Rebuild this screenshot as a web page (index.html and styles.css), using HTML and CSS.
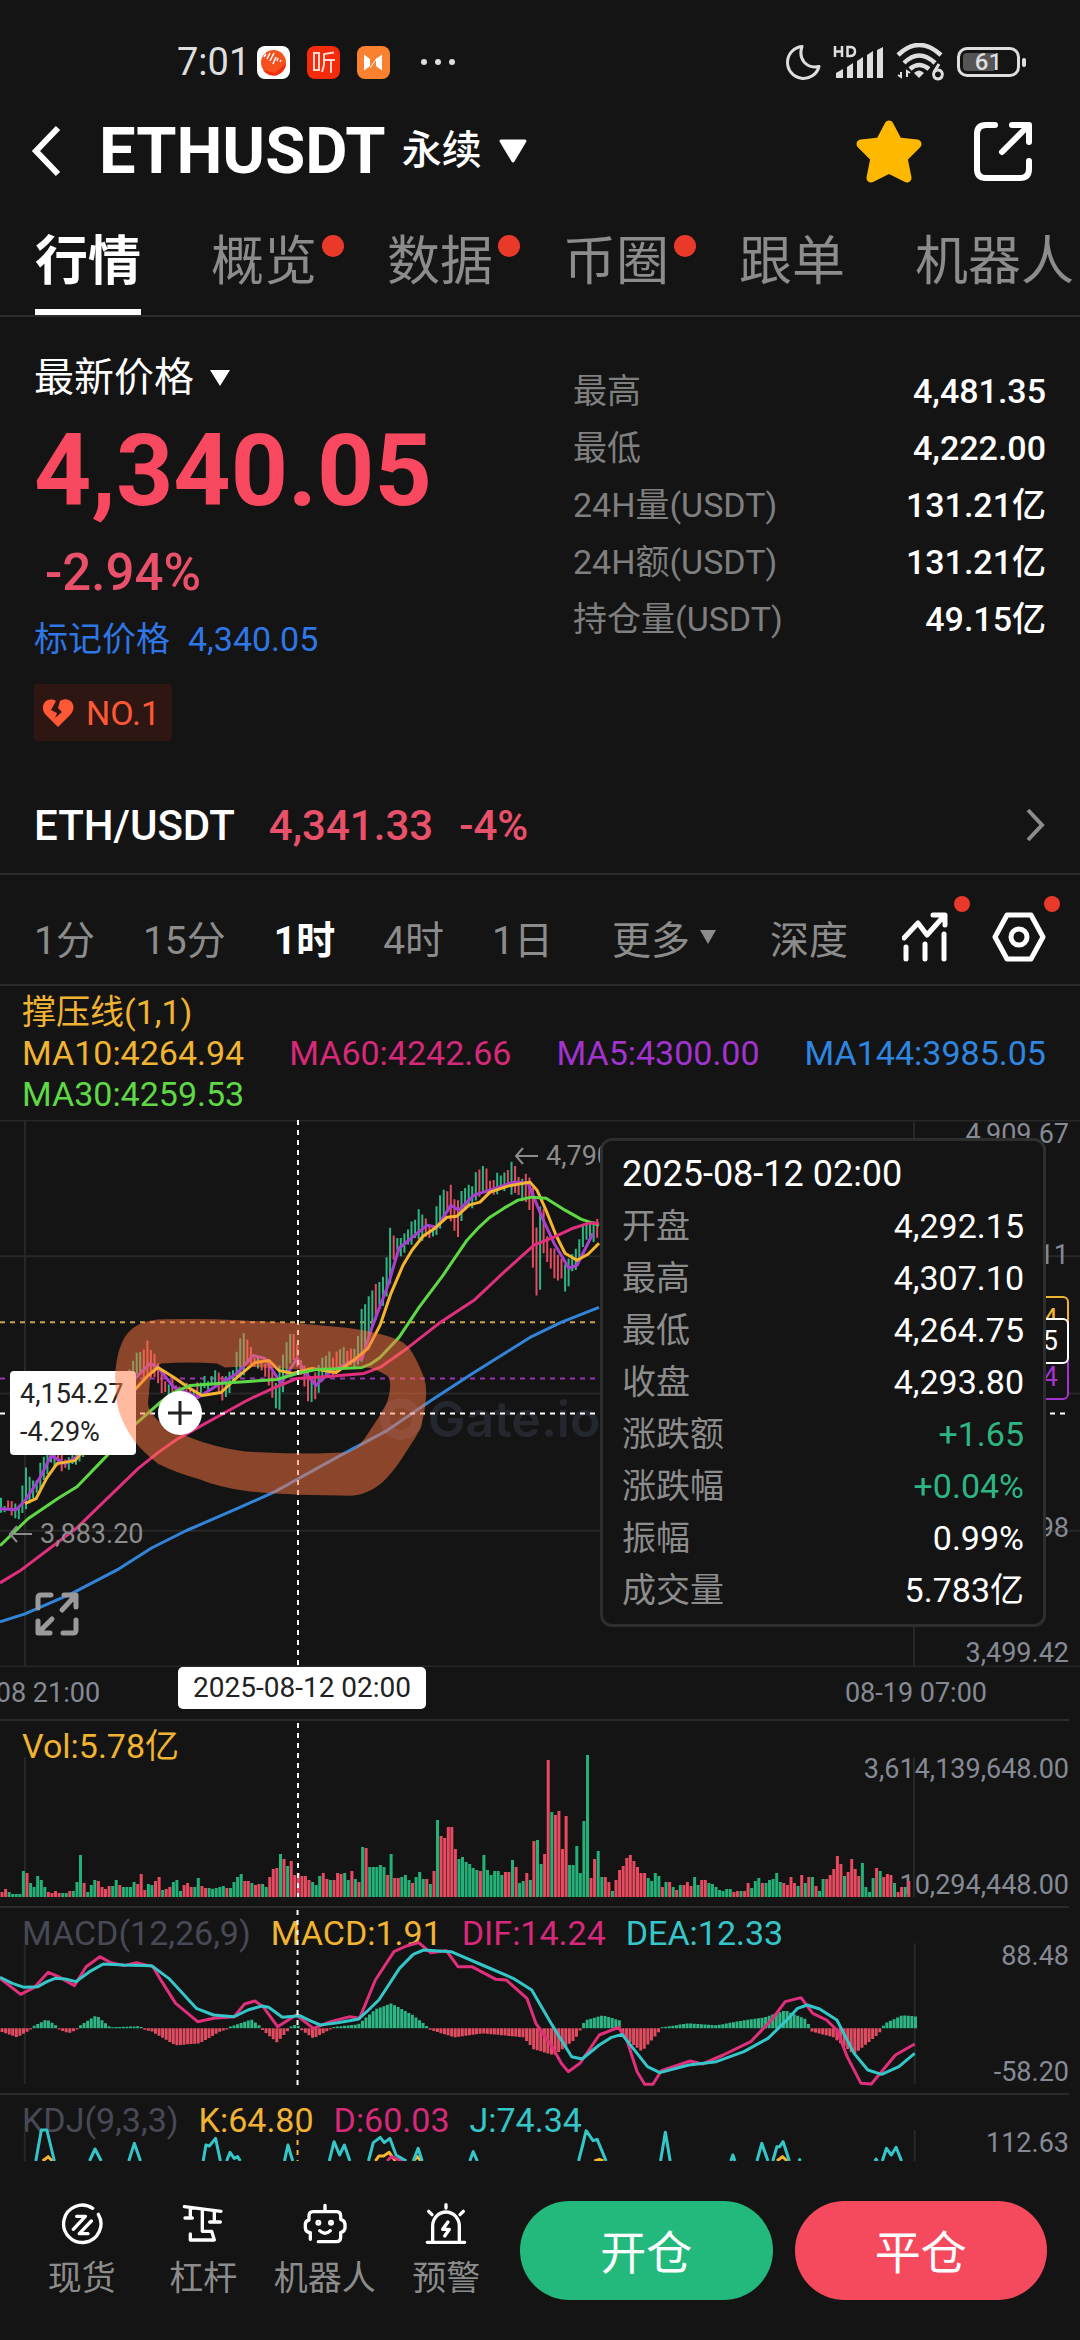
FILE: index.html
```html
<!DOCTYPE html>
<html lang="zh-CN">
<head>
<meta charset="utf-8">
<meta name="viewport" content="width=device-width, initial-scale=1">
<title>ETHUSDT 永续</title>
<link rel="stylesheet" href="styles.css">
</head>
<body>
<div class="status">
  <div class="status-left">
    <span>7:01</span>
    <svg class="app" viewBox="0 0 33 33"><rect width="33" height="33" rx="8" fill="#fff"/><circle cx="16.500" cy="16.500" r="12.500" fill="#f4511e"/><path d="M6 24A12.500 12.500 0 0 0 29 17L18 27Z" fill="#f03010"/><path d="M7 11l2-3M10 13l3-6M13 15l4-8M16 18l3-7M20 15l1-3M23 16l1-2" stroke="#fff" stroke-width="1.500"/></svg>
    <svg class="app" viewBox="0 0 33 33"><rect width="33" height="33" rx="8" fill="#f52b0c"/><path d="M6 7H12V24H7V8M27 6.500L17 8V19L15 26M17 14H28M24 14V27" fill="none" stroke="#ffd9cf" stroke-width="2"/></svg>
    <svg class="app" viewBox="0 0 33 33"><rect width="33" height="33" rx="8" fill="#f9812f"/><path d="M7 8.500L13 13V20L7 24.500ZM25 8.500L19 13V20L25 24.500Z" fill="#fff"/><path d="M13 22L20 12" stroke="#fff" stroke-width="1"/></svg>
    <svg class="more-dots" viewBox="0 0 34 6"><circle cx="3" cy="3" r="3"/><circle cx="17" cy="3" r="3"/><circle cx="31" cy="3" r="3"/></svg>
  </div>
  <div class="status-right">
    <svg width="36" height="36" viewBox="0 0 36 36"><path d="M16 2.500A16 16 0 1 0 33 22.500C20 25 12 15 16 2.500Z" fill="none" stroke="#dedede" stroke-width="3" stroke-linejoin="round"/></svg>
    <svg width="52" height="36" viewBox="0 0 52 36"><g stroke="#dedede" stroke-width="2.500" fill="none"><path d="M2 2V13M9 2V13M2 7.500H9M14.500 3V12H17Q22 12 22 7.500Q22 3 17 3Z"/></g><g fill="#dedede"><path d="M3 29L10 25V34H3ZM14 23L20 19V34H14ZM24 17L30 13V34H24ZM34 11L40 7V34H34ZM44 6L50 3V34H44Z"/></g></svg>
    <svg width="50" height="38" viewBox="0 0 50 38"><g fill="none" stroke="#dedede" stroke-width="4.500"><path d="M2 12Q23-8 45 12M8 20Q23 5 39 20M14 26Q23 18 33 26"/><path d="M43 21L38 29M42 27A4.500 4.500 0 1 1 41.900 27" stroke-width="3"/><path d="M5 29V34L2 32M11 34V28L14 30" stroke-width="2"/></g><path d="M18 30Q23 25 28 30L23 35Z" fill="#dedede"/></svg>
    <div class="battery"><span>61</span></div>
  </div>
</div>

<header class="head">
  <button class="icon-btn" aria-label="返回"><svg width="32" height="54" viewBox="0 0 32 54"><path d="M27 4L5 27L27 50" fill="none" stroke="#fff" stroke-width="6"/></svg></button>
  <h1>ETHUSDT</h1>
  <button class="contract">永续 <svg width="30" height="26" viewBox="0 0 30 26"><path d="M3 3H27L15 23Z" fill="#fff" stroke="#fff" stroke-width="3" stroke-linejoin="round"/></svg></button>
  <div class="head-actions">
    <button class="icon-btn" aria-label="收藏"><svg width="66" height="64" viewBox="0 0 66 64"><path d="M33 6L42 23L61 25L47 39L51 59L33 50L15 59L19 39L5 25L24 23Z" fill="#ffb800" stroke="#ffb800" stroke-width="9" stroke-linejoin="round"/></svg></button>
    <button class="icon-btn" aria-label="分享"><svg width="60" height="60" viewBox="0 0 60 60"><path d="M22 4H13Q4 4 4 13V48Q4 57 13 57H47Q56 57 56 48V40M39 4H56V21M55 5L29 31" fill="none" stroke="#fff" stroke-width="6" stroke-linecap="round" stroke-linejoin="round"/></svg></button>
  </div>
</header>

<nav class="tabs">
  <a href="#" class="on">行情</a>
  <a href="#" class="dot">概览</a>
  <a href="#" class="dot">数据</a>
  <a href="#" class="dot">币圈</a>
  <a href="#">跟单</a>
  <a href="#">机器人</a>
</nav>

<section class="quote">
  <div class="quote-main">
    <button class="price-kind">最新价格 <svg width="20" height="18" viewBox="0 0 20 18"><path d="M0 1H20L10 17Z" fill="#fff"/></svg></button>
    <div class="price">4,340.05</div>
    <div class="change">-2.94%</div>
    <div class="mark"><span>标记价格</span><span>4,340.05</span></div>
    <a href="#" class="badge"><svg width="32" height="30" viewBox="0 0 32 30"><path d="M16 29L3 16C-3 7 5-2 14 3L9 12L15 15L13 20L20 14L16 10L18 3C27-3 36 7 29 16Z" fill="#ff5836"/></svg>NO.1</a>
  </div>
  <dl class="stats">
    <div><dt>最高</dt><dd>4,481.35</dd></div>
    <div><dt>最低</dt><dd>4,222.00</dd></div>
    <div><dt>24H量(USDT)</dt><dd>131.21亿</dd></div>
    <div><dt>24H额(USDT)</dt><dd>131.21亿</dd></div>
    <div><dt>持仓量(USDT)</dt><dd>49.15亿</dd></div>
  </dl>
</section>

<a href="#" class="spot">
  <span>ETH/USDT</span><span class="down">4,341.33</span><span class="down">-4%</span>
  <svg width="22" height="36" viewBox="0 0 22 36"><path d="M4 3L18 18L4 33" fill="none" stroke="#8c8c8c" stroke-width="4"/></svg>
</a>

<div class="frames">
  <div class="frames-list">
    <button>1分</button><button>15分</button><button class="on">1时</button><button>4时</button><button>1日</button>
  </div>
  <div class="frames-tools">
    <button>更多<svg class="tri" width="16" height="14" viewBox="0 0 16 14"><path d="M0 0H16L8 14Z" fill="#8c8c8c"/></svg></button>
    <button>深度</button>
    <div class="frames-icons">
      <button class="dot" aria-label="指标"><svg width="46" height="50" viewBox="0 0 46 50"><path d="M2 26L16 11L25 23L42 4M31 3H43V13M4 35V47M23 32V47M42 22V47" fill="none" stroke="#fff" stroke-width="5" stroke-linecap="round" stroke-linejoin="round"/></svg></button>
      <button class="dot" aria-label="设置"><svg width="54" height="50" viewBox="0 0 54 50"><path d="M15 3H39L51 25L39 47H15L3 25Z" fill="none" stroke="#fff" stroke-width="5" stroke-linejoin="round"/><circle cx="27" cy="25" r="8" fill="none" stroke="#fff" stroke-width="5"/></svg></button>
    </div>
  </div>
</div>

<div class="legend">
  <span class="row c-gold">撑压线(1,1)</span>
  <span class="c-gold">MA10:4264.94</span><span class="c-pink">MA60:4242.66</span><span class="c-purple">MA5:4300.00</span><span class="c-blue">MA144:3985.05</span>
  <span class="c-green">MA30:4259.53</span>
</div>

<section class="chart">
  <svg class="plot" viewBox="0 0 1080 546" preserveAspectRatio="none">
    <path class="grid" d="M0 0.500H1080M0 136H1080M0 273H1080M0 410H1080M0 545.500H1080M25 0V546M914 0V546"/>
  </svg>
  <div class="watermark"><i></i>Gate.io</div>
  <svg class="plot" viewBox="0 0 1080 546" preserveAspectRatio="none">
    <path d="M0 202H1068" stroke="#c9a24a" stroke-width="2" stroke-dasharray="5 5"/>
    <path d="M0 258H1068" stroke="#9a35b8" stroke-width="2" stroke-dasharray="5 5"/>
    <path id="candles-up" stroke="#2db583" stroke-width="2"/>
    <path id="candles-down" stroke="#e04c60" stroke-width="2"/>
    <g class="lines">
      <polyline stroke="#a83fd0" points="0,388 16,389 25,380 40,357 51,335 65,343 79,335 136,257 150,243 158,247 174,267 198,277 217,265 237,253 253,235 265,238 281,263 297,238 306,253 316,265 328,253 348,242 362,238 372,207 388,165 399,128 415,115 427,105 437,107 451,85 459,90 474,75 490,70 514,62 528,63 542,97 554,123 569,148 577,145 593,113"/>
      <polyline stroke="#f5b52e" points="25,383 36,378 47,357 57,343 75,340 136,268 148,255 158,247 174,257 190,268 202,275 221,272 237,257 255,242 269,240 279,250 293,253 312,248 336,252 356,238 368,228 380,205 391,173 403,145 412,130 423,116 435,108 447,97 457,96 469,85 480,82 490,72 508,66 530,62 537,70 546,90 556,115 565,133 577,140 588,134 599,123"/>
      <polyline stroke="#5fd846" points="0,425 28,398 59,377 77,366 107,335 136,303 160,282 174,272 190,265 233,262 277,259 297,253 316,249 340,248 362,247 370,244 380,237 399,217 419,187 443,155 467,120 478,108 490,97 504,88 518,80 532,77 546,78 565,90 581,99 599,105"/>
      <polyline stroke="#e0307c" points="0,462 20,450 77,407 138,348 158,332 178,318 245,281 253,277 275,267 297,258 328,256 364,253 380,247 407,228 439,203 474,180 506,150 534,125 554,117 573,108 589,103 599,103"/>
      <polyline stroke="#3184d8" points="0,501 25,493 71,473 119,448 152,427 186,410 237,388 275,371 340,335 387,310 431,280 474,252 530,217 561,202 599,187"/>
    </g>
    <path class="cross" d="M298 0V546M0 293H1069"/>
  </svg>
  <span class="note note-high"><svg width="24" height="18" viewBox="0 0 24 18"><path d="M24 9H2M9 1L2 9L9 17" fill="none" stroke="#8c8c8c" stroke-width="2"/></svg>4,790.00</span>
  <span class="note note-low"><svg width="24" height="18" viewBox="0 0 24 18"><path d="M24 9H2M9 1L2 9L9 17" fill="none" stroke="#8c8c8c" stroke-width="2"/></svg>3,883.20</span>
  <div class="cross-price">4,154.27<br>-4.29%</div>
  <svg class="plot" viewBox="0 0 1080 546" preserveAspectRatio="none">
    <path fill="#ff7542" fill-opacity=".5" fill-rule="evenodd" d="M115 257C116 240 118 232 122 222Q132 199 165 199Q200 198 240 200L297 203L344 207Q385 212 403 222Q410 227 415 237Q426 258 426 268Q427 282 421 307Q414 320 407 330Q396 348 387 357Q372 373 352 375L300 374Q265 373 245 370Q217 366 198 358Q176 352 158 343Q143 332 134 320Q120 300 117 283ZM161 243Q190 241 217 243L225 247L245 246L300 249L350 246Q370 245 385 254Q391 256 390 268Q389 280 383 290L368 313Q356 332 344 332L316 333Q280 333 245 331Q215 327 190 317Q168 308 158 300Q148 290 148 283L150 260Q152 247 161 243Z"/>
  </svg>
  <button class="plus" aria-label="添加"><svg width="44" height="44" viewBox="0 0 44 44"><path d="M22 10V34M10 22H34" stroke="#222" stroke-width="3"/></svg></button>
  <button class="expand" aria-label="全屏"><svg width="44" height="44" viewBox="0 0 44 44"><path d="M16 3H6Q3 3 3 6V16M28 41H38Q41 41 41 38V28M29 3H41V15M40 4L27 18M15 41H3V29M4 40L17 27" fill="none" stroke="#9a9a9a" stroke-width="5" stroke-linecap="round" stroke-linejoin="round"/></svg></button>
  <span class="axis y-a">4,909.67</span>
  <span class="axis y-b">4,557.11</span>
  <span class="box box-gold">4,364.54</span>
  <span class="box box-purple">4,221.64</span>
  <span class="box box-white">4,340.05</span>
  <span class="axis y-c">3,851.98</span>
  <span class="axis y-d">3,499.42</span>
  <div class="tip">
    <div class="tip-time">2025-08-12 02:00</div>
    <dl>
      <div><dt>开盘</dt><dd>4,292.15</dd></div>
      <div><dt>最高</dt><dd>4,307.10</dd></div>
      <div><dt>最低</dt><dd>4,264.75</dd></div>
      <div><dt>收盘</dt><dd>4,293.80</dd></div>
      <div><dt>涨跌额</dt><dd class="up">+1.65</dd></div>
      <div><dt>涨跌幅</dt><dd class="up">+0.04%</dd></div>
      <div><dt>振幅</dt><dd>0.99%</dd></div>
      <div><dt>成交量</dt><dd>5.783亿</dd></div>
    </dl>
  </div>
</section>

<div class="times">
  <span class="t-left">08-08 21:00</span>
  <span class="t-cross">2025-08-12 02:00</span>
  <span class="t-right">08-19 07:00</span>
</div>

<section class="panel">
  <svg class="plot" viewBox="0 0 1080 187" preserveAspectRatio="none">
    <path class="grid" d="M25 36V176M914 36V176"/>
  </svg>
  <div class="panel-legend"><span class="c-gold">Vol:5.78亿</span></div>
  <span class="axis p-top">3,614,139,648.00</span>
  <span class="axis p-bottom">10,294,448.00</span>
  <svg class="plot" viewBox="0 0 1080 187" preserveAspectRatio="none">
    <path id="vol-up" stroke="#23b177" stroke-width="3"/>
    <path id="vol-down" stroke="#e84a5f" stroke-width="3"/>
    <path class="cross" d="M298 2V176"/>
  </svg>
</section>

<section class="panel">
  <div class="panel-legend"><span class="c-dim">MACD(12,26,9)</span><span class="c-gold">MACD:1.91</span><span class="c-pink">DIF:14.24</span><span class="c-cyan">DEA:12.33</span></div>
  <span class="axis p-top">88.48</span>
  <span class="axis p-bottom">-58.20</span>
  <svg class="plot" viewBox="0 24 1568 561" preserveAspectRatio="none">
    <path class="grid" d="M36 130V553M1328 130V553"/>
    <path id="macd-up" class="thin" stroke="#2db583"/>
    <path id="macd-down" class="thin" stroke="#e04c60"/>
    <g class="lines">
      <polyline stroke="#e0307c" points="0,235 30,283 50,262 70,217 85,230 108,257 125,200 145,170 160,187 180,197 198,188 222,200 235,245 255,310 287,365 310,355 340,350 355,312 370,303 382,320 403,380 430,345 455,385 480,365 508,350 522,355 545,240 572,155 590,138 608,128 625,158 648,152 665,200 685,200 720,238 735,240 765,295 778,370 800,435 815,490 825,515 842,490 870,405 898,382 910,420 925,515 936,553 948,553 960,512 985,495 1002,483 1020,492 1050,465 1090,425 1120,360 1140,305 1163,293 1180,340 1200,360 1215,390 1230,470 1250,550 1265,552 1300,465 1328,432"/>
      <polyline stroke="#34c6c9" points="0,232 18,250 35,262 55,260 68,245 80,235 95,237 110,245 130,215 150,192 180,195 220,197 245,235 285,325 310,345 340,350 360,330 380,318 390,322 410,352 435,347 450,362 465,375 490,368 520,358 535,330 550,300 580,205 600,163 615,150 655,155 700,195 745,235 772,270 800,370 830,470 845,477 870,435 888,412 903,403 925,460 940,500 958,518 1000,495 1040,485 1080,455 1115,415 1140,365 1158,325 1172,315 1190,327 1215,360 1240,460 1260,510 1280,523 1305,500 1328,460"/>
    </g>
    <path class="cross" d="M432 30V555"/>
  </svg>
</section>

<section class="panel panel-cut">
  <div class="panel-legend"><span class="c-dim">KDJ(9,3,3)</span><span class="c-gold">K:64.80</span><span class="c-pink">D:60.03</span><span class="c-cyan">J:74.34</span></div>
  <span class="axis p-top">112.63</span>
  <svg class="plot" viewBox="0 585 1568 198" preserveAspectRatio="none">
    <path class="grid" d="M36 690V783M1328 690V783"/>
    <g class="lines">
      <path stroke="#f5b52e" d="M62 783L70 770L76 783M545 783L550 768L557 768L565 757L574 783M600 783L606 770L611 783M863 783L870 778L876 783M1128 783L1136 770L1143 783"/>
      <path stroke="#e0307c" d="M562 783L568 770L578 778L590 783"/>
      <path stroke="#34c6c9" d="M52 783L60 690H68L79 783M130 783L138 747L147 783M187 783L195 730L204 783M295 783L299 735L304 738L313 715L320 783M329 783L334 757L340 775L345 770L349 783M413 783L418 735L425 783M478 783L485 725L493 765L500 735L508 783M535 783L542 728L552 712L558 728L566 715L575 765L590 783M600 783L607 745L613 783M682 783L687 755L693 783M840 783L846 735L851 692L861 722L867 718L880 783M959 783L966 697L973 783M1061 783L1064 765L1067 783M1099 783L1106 730L1115 783M1122 783L1128 740H1132L1137 725L1146 783M1160 783L1161 779L1162 783M1270 783L1272 777L1274 783M1281 783L1287 745L1294 765L1301 742L1309 783"/>
    </g>
    <path class="cross cross-gold" d="M432 690V783"/>
  </svg>
</section>

<footer class="bar">
  <nav class="bar-nav">
    <a href="#"><svg viewBox="0 0 132 132"><path d="M98 19A56 56 0 1 0 115 37M40 82L76 43H50M94 57L58 95H84"/></svg>现货</a>
    <a href="#"><svg viewBox="0 0 132 132"><path d="M10 14L120 28M28 18V46M12 48H34M100 28V58M86 60H118M64 24V88H92L100 114H28V96"/></svg>杠杆</a>
    <a href="#"><svg viewBox="0 0 132 132"><path d="M66 10V26M22 112V92Q8 90 7 78V66Q8 56 18 54V42Q18 29 30 29H102Q113 29 113 42V52Q125 56 126 66V78Q125 88 113 92V106Q113 119 100 119H46M50 86Q66 102 82 86"/><circle cx="46" cy="62" r="4"/><circle cx="84" cy="62" r="4"/></svg>机器人</a>
    <a href="#"><svg viewBox="0 0 132 132"><path d="M10 121H122M26 118V72A40 42 0 0 1 106 72V118M66 8V18M14 28L24 38M118 28L108 38M72 60L56 82H76L62 102"/></svg>预警</a>
  </nav>
  <div class="trades">
    <button class="trade open">开仓</button>
    <button class="trade close">平仓</button>
  </div>
</footer>
<script src="chart.js"></script>
</body>
</html>
```
FILE: styles.css
```css
* { box-sizing: border-box; }
body {
  margin: 0;
  background: #141414;
  color: #fff;
  font-family: Roboto, "Noto Sans CJK SC", sans-serif;
  font-size: 34px;
  overflow-x: hidden;
}
button { border: 0; padding: 0; background: none; color: inherit; font: inherit; }
a { color: inherit; text-decoration: none; }
dl, dd, h1 { margin: 0; }
svg { display: block; flex: none; }

.status { display: flex; justify-content: space-between; align-items: center; height: 124px; padding: 0 54px 0 177px; font-size: 38px; color: #dedede; }
.status-left { display: flex; align-items: center; gap: 17px; }
.status-left span { width: 63px; line-height: 40px; }
.app { width: 33px; height: 33px; }
.more-dots { width: 34px; height: 6px; margin-left: 14px; fill: #dedede; }
.status-right { display: flex; align-items: center; gap: 11px; }
.battery { position: relative; display: flex; align-items: center; justify-content: center; width: 63px; height: 30px; margin-right: 6px; border: 3px solid #dedede; border-radius: 10px; font-size: 24px; font-weight: 500; background: linear-gradient(90deg, #555 60%, transparent 60%) content-box; padding: 3px; }
.battery::after { content: ""; position: absolute; right: -9px; top: 8px; width: 4px; height: 9px; border-radius: 2px; background: #dedede; }

.head { display: flex; align-items: center; height: 54px; padding: 0 47px 0 31px; }
.head h1 { margin-left: 36px; font-size: 65px; line-height: 54px; font-weight: 700; }
.contract { display: flex; align-items: center; gap: 16px; margin-left: 16px; font-size: 40px; font-weight: 500; line-height: 54px; }
.head-actions { display: flex; align-items: center; gap: 51px; margin-left: auto; }

.tabs { display: flex; gap: 70px; height: 139px; padding: 46px 0 0 35px; border-bottom: 2px solid #2b2b2b; font-size: 53px; line-height: 76px; color: #8c8c8c; white-space: nowrap; overflow: hidden; }
.tabs a { position: relative; flex: none; }
.tabs .on { color: #fff; font-weight: 700; border-bottom: 6px solid #fff; height: 91px; }
.dot { position: relative; }
.dot::after { content: ""; position: absolute; top: 11px; right: -27px; width: 22px; height: 22px; border-radius: 50%; background: #e8392b; }

.quote { display: flex; justify-content: space-between; padding: 36px 34px 0 34px; }
.quote-main { display: flex; flex-direction: column; align-items: flex-start; }
.price-kind { display: flex; align-items: center; gap: 16px; font-size: 40px; line-height: 50px; }
.price { margin-top: 10px; font-size: 100px; line-height: 116px; font-weight: 700; color: #f84960; }
.change { margin: 14px 0 0 11px; font-size: 51px; line-height: 60px; font-weight: 500; color: #e9506a; }
.mark { display: flex; gap: 18px; margin-top: 11px; line-height: 50px; color: #2f76e6; }
.badge { display: flex; align-items: center; gap: 12px; height: 57px; margin-top: 20px; padding: 0 12px 0 8px; border-radius: 4px; background: #2e1713; color: #ff5836; }
.stats { width: 473px; padding-top: 10px; line-height: 57px; }
.stats div { display: flex; justify-content: space-between; }
.stats dt { color: #7f7f7f; }
.stats dd { font-weight: 500; }

.spot { display: flex; align-items: center; gap: 34px; height: 134px; padding: 36px 34px 0; border-bottom: 2px solid #2b2b2b; font-size: 42px; font-weight: 500; }
.spot .down { color: #e9506a; }
.spot .down + .down { margin-left: -8px; }
.spot svg { margin-left: auto; }

.frames { display: flex; justify-content: space-between; height: 111px; padding: 14px 34px 0; border-bottom: 2px solid #2b2b2b; font-size: 39px; color: #8c8c8c; white-space: nowrap; }
.frames-list { display: flex; gap: 48px; }
.frames .on { color: #fff; font-weight: 700; }
.frames-tools { display: flex; gap: 54px; }
.frames-tools button { display: flex; align-items: center; gap: 10px; }
.frames-icons { display: flex; align-items: center; gap: 44px; }
.frames-icons .dot::after { top: -16px; right: -22px; width: 16px; height: 16px; }
.frames-icons .dot:last-child::after { right: -14px; }

.legend { display: flex; flex-wrap: wrap; align-content: flex-start; column-gap: 45px; min-height: 134px; padding: 6px 22px 0; line-height: 41px; }
.legend .row { flex: 0 0 100%; }
.c-gold { color: #f0b332; }
.c-pink { color: #d6297a; }
.c-purple { color: #a233cf; }
.c-blue { color: #2f86e0; }
.c-green { color: #5fd846; }
.c-cyan { color: #34c6c9; }
.c-dim { color: #474955; }

.chart { position: relative; height: 547px; overflow: hidden; }
.plot { position: absolute; left: 0; top: 0; width: 100%; height: 100%; fill: none; }
.grid { stroke: #272727; stroke-width: 2; vector-effect: non-scaling-stroke; }
.lines * { fill: none; stroke-width: 3; stroke-linejoin: round; vector-effect: non-scaling-stroke; }
.thin { stroke-width: 3; vector-effect: non-scaling-stroke; }
.cross { stroke: #fff; stroke-width: 2; stroke-dasharray: 5 5; vector-effect: non-scaling-stroke; }
.cross-gold { stroke: #f0b332; }
.watermark { position: absolute; left: 380px; top: 270px; display: flex; align-items: center; gap: 6px; font: 600 50px/58px Inter, sans-serif; color: #25272f; }
.watermark i { width: 42px; height: 42px; border: 10px solid #25272f; border-radius: 50%; }
.note { position: absolute; display: flex; align-items: center; gap: 8px; font-size: 27px; line-height: 32px; color: #8c8c8c; }
.note-high { left: 514px; top: 20px; }
.note-low { left: 8px; top: 398px; }
.cross-price { position: absolute; left: 10px; top: 251px; width: 126px; padding: 4px 10px; border-radius: 4px; background: #fff; color: #222; font-size: 27px; line-height: 38px; }
.plus { position: absolute; left: 158px; top: 271px; border-radius: 50%; background: #fff; }
.expand { position: absolute; left: 35px; top: 472px; }
.axis { position: absolute; right: 11px; font-size: 27px; line-height: 32px; color: #868a94; }
.y-a { top: -2px; }
.y-b { top: 119px; }
.y-c { top: 392px; }
.y-d { top: 517px; }
.box { position: absolute; right: 11px; padding: 0 9px; border: 2px solid; border-radius: 6px; background: #141414; font-size: 27px; line-height: 42px; }
.box-gold { top: 176px; color: #f0b332; }
.box-purple { top: 234px; color: #a233cf; }
.box-white { top: 198px; }
.tip { position: absolute; right: 34px; top: 18px; width: 446px; padding: 7px 19px 8px; border: 3px solid #2e2e2e; border-radius: 12px; background: #141414; line-height: 52px; }
.tip-time { font-size: 36px; }
.tip dl div { display: flex; justify-content: space-between; }
.tip dt { color: #8c8c8c; }
.tip .up { color: #2db583; }

.times { position: relative; display: flex; align-items: center; justify-content: space-between; height: 54px; padding-right: 82px; border-bottom: 2px solid #2b2b2b; margin-right: 11px; font-size: 27px; color: #868a94; }
.t-left { margin-left: -42px; }
.t-cross { position: absolute; left: 178px; top: 0; padding: 0 15px; border-radius: 5px; background: #fff; color: #222; font-size: 28px; line-height: 42px; }

.panel { position: relative; height: 187px; }
.panel::after { content: ""; position: absolute; left: 0; right: 11px; bottom: 0; height: 2px; background: #2b2b2b; }
.panel-legend { display: flex; gap: 20px; padding: 4px 22px; line-height: 42px; }
.p-top { top: 32px; }
.p-bottom { top: 148px; }
.panel-cut { height: 66px; overflow: hidden; }
.panel-cut::after { display: none; }

.bar { display: flex; align-items: center; gap: 13px; height: 179px; padding: 0 33px 0 21px; }
.bar-nav { flex: 486; display: flex; }
.bar-nav a { flex: 1; display: flex; flex-direction: column; align-items: center; gap: 10px; line-height: 44px; color: #8c8c8c; white-space: nowrap; }
.bar-nav svg { width: 44px; height: 44px; fill: none; stroke: #fff; stroke-width: 10; stroke-linecap: round; stroke-linejoin: round; }
.trades { flex: 527; display: flex; gap: 22px; }
.trade { flex: 1; height: 99px; padding-bottom: 4px; border-radius: 50px; font-size: 46px; color: #fff; }
.trade.open { background: #24b97c; }
.trade.close { background: #f54a5e; }
```
FILE: chart.js
```js
const STEP = 3.57;

// Candle wicks: x, high, low
const range = [
  [0,382,390],[20,384,397],[24,349,394],[28,352,382],[35,362,375],[40,340,367],[50,325,345],[62,333,350],[70,335,348],[80,325,340],
  [100,290,310],[131,247,258],[137,236,256],[142,228,258],[148,224,257],[154,235,255],[160,253,272],[168,262,275],[180,265,275],
  [195,265,282],[205,257,270],[215,253,267],[223,260,280],[235,242,262],[241,217,257],[248,218,245],[254,236,248],[262,240,252],
  [270,250,270],[276,258,288],[281,240,286],[286,225,258],[292,208,238],[300,233,255],[308,250,277],[313,255,280],[320,245,268],
  [328,232,252],[340,233,250],[348,225,248],[356,235,250],[361,188,240],[366,185,222],[372,168,207],[378,165,190],[384,152,180],
  [390,105,165],[395,113,133],[402,120,135],[408,105,125],[418,92,118],[424,95,120],[432,107,117],[438,75,110],[446,73,90],
  [451,67,105],[458,85,113],[464,68,95],[472,62,85],[480,50,75],[487,50,72],[493,65,78],[500,52,72],[508,48,65],[512,45,75],
  [518,55,72],[526,58,82],[531,62,95],[533,68,150],[536,105,176],[540,85,170],[543,85,128],[548,120,140],[552,130,155],
  [557,135,155],[562,140,162],[567,145,175],[573,130,150],[580,115,140],[587,100,115],[594,102,118],[600,97,113]
];

// Volume bars, left to right: g rising, r falling, height in px
const volume = "r5 r8 g5 g3 g3 g3 g26 r24 g14 g10 g21 g17 g10 r5 r4 r6 r4 g4 g4 r6 g6 g15 g42 r14 g5 g12 g17 r16 r10 r8 r11 g11 g17 r12 g10 g10 g10 g15 r13 r23 r7 g13 g12 r16 r20 g7 r8 r10 g15 g17 g6 r12 r14 r10 g10 g19 r11 r9 g9 g8 g9 g10 g11 r9 g9 g15 g20 g23 r16 r16 g14 r12 r13 g13 g10 r20 r28 r29 g43 r38 g31 r36 r22 r24 r21 r21 r17 g15 g12 g21 r24 r18 g17 r17 r24 r23 g24 g17 r26 g18 r15 g50 r49 g30 g30 g30 g32 g30 r22 g43 r19 r19 g20 g22 g17 r14 g20 g25 g18 r18 g13 r26 g77 r61 r59 r70 r70 r48 g38 g40 g35 g33 g29 g27 r26 g42 g27 g22 g26 g26 g22 r25 r25 g37 r30 g14 g16 r24 g17 r56 g57 g33 r43 r137 g85 r82 r86 r48 r81 g32 g32 g51 g24 g76 g142 r19 r38 g46 g20 r20 r15 g6 r17 r27 r31 r39 r42 r36 r30 r24 r24 g19 g16 g24 g21 r10 g15 r15 g10 r7 g12 r12 r15 r11 g20 g12 r17 r17 g14 g13 g10 g7 g6 g8 g8 r5 r6 g6 r6 r14 g9 g16 g19 r14 g14 g17 g18 g24 g15 r14 r12 r20 r14 g11 r22 g14 r20 g20 r11 g6 g18 r18 r22 r28 r41 r33 g21 r25 r38 r28 r21 g34 g10 g5 g19 r29 g26 r20 r23 r22 g14 r5 r10 g10 r16".split(" ");

// MACD histogram outline: x, signed height
const macd = [
  [0,-2],[25,-8],[45,0],[68,8],[85,0],[100,-4],[112,0],[140,12],[160,0],[200,1],[220,-2],[255,-16],[290,-14],[320,-2],[340,2],
  [365,8],[380,0],[402,-13],[420,0],[430,3],[455,-9],[480,0],[520,3],[545,18],[568,24],[600,12],[622,0],[660,-8],[700,-4],
  [760,-8],[775,-20],[805,-26],[835,-10],[843,0],[850,7],[875,12],[900,7],[905,-8],[932,-22],[960,0],[1000,4],[1040,2],
  [1080,7],[1110,10],[1140,17],[1170,8],[1178,-2],[1210,-8],[1240,-25],[1275,-5],[1285,4],[1310,12],[1328,11]
];

function at(rows, x, col) {
  let i = 1;
  while (i < rows.length - 1 && rows[i][0] < x) i++;
  const a = rows[i - 1], b = rows[i];
  return a[col] + (b[col] - a[col]) * (x - a[0]) / (b[0] - a[0]);
}
const noise = n => { const s = Math.sin(n * 91.7) * 4375.5; return s - Math.floor(s); };
const draw = (id, d) => document.getElementById(id).setAttribute("d", d || "M0 0");

let up = "", down = "";
for (let i = 0; i < 168; i++) {
  const x = 1 + i * STEP;
  const hi = at(range, x, 1) + noise(i) * 10 - 5, lo = at(range, x, 2) - noise(i + 300) * 8 + 4;
  const slope = at(range, x + 4, 1) - at(range, x - 4, 1);
  const seg = `M${x.toFixed(1)} ${hi.toFixed(1)}V${Math.max(lo, hi + 5).toFixed(1)}`;
  if (noise(i + 50) * 24 - 12 > slope) up += seg; else down += seg;
}
draw("candles-up", up);
draw("candles-down", down);

up = down = "";
volume.forEach((bar, i) => {
  const x = 2 + i * STEP;
  const seg = `M${x.toFixed(1)} 176V${176 - bar.slice(1)}`;
  if (bar[0] === "g") up += seg; else down += seg;
});
draw("vol-up", up);
draw("vol-down", down);

up = down = "";
for (let x = 3; x < 1330; x += 5.18) {
  const h = at(macd, x, 1) * 3;
  const seg = `M${x.toFixed(1)} 385V${(385 - h - Math.sign(h) * 3).toFixed(1)}`;
  if (h >= 0) up += seg; else down += seg;
}
draw("macd-up", up);
draw("macd-down", down);
```
